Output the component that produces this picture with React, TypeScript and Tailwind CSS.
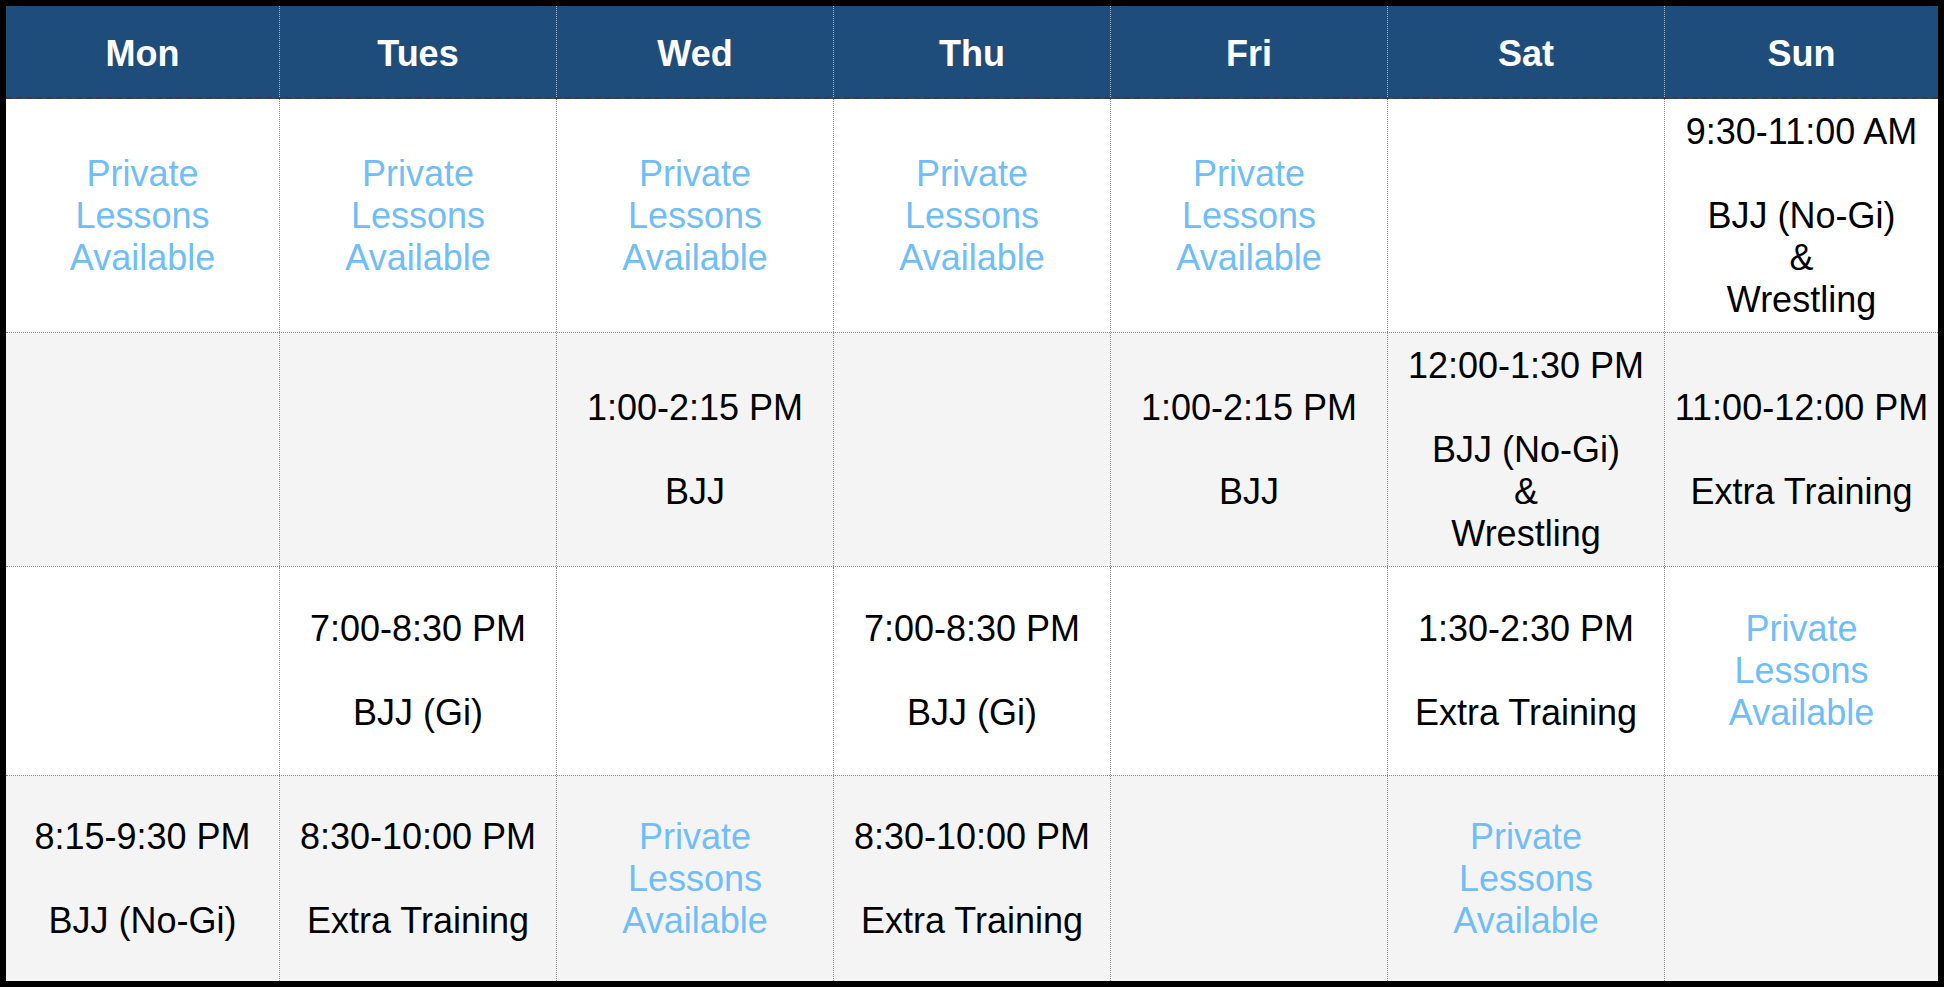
const days = ["Mon", "Tues", "Wed", "Thu", "Fri", "Sat", "Sun"];

const PRIVATE = "private";

type Cell = string[] | typeof PRIVATE | null;

const rows: { height: string; bg: string; cells: Cell[] }[] = [
  {
    height: "h-[233px]",
    bg: "bg-white",
    cells: [
      PRIVATE,
      PRIVATE,
      PRIVATE,
      PRIVATE,
      PRIVATE,
      null,
      ["9:30-11:00 AM", "", "BJJ (No-Gi)", "&", "Wrestling"],
    ],
  },
  {
    height: "h-[234px]",
    bg: "bg-[#f4f4f4]",
    cells: [
      null,
      null,
      ["1:00-2:15 PM", "", "BJJ"],
      null,
      ["1:00-2:15 PM", "", "BJJ"],
      ["12:00-1:30 PM", "", "BJJ (No-Gi)", "&", "Wrestling"],
      ["11:00-12:00 PM", "", "Extra Training"],
    ],
  },
  {
    height: "h-[209px]",
    bg: "bg-white",
    cells: [
      null,
      ["7:00-8:30 PM", "", "BJJ (Gi)"],
      null,
      ["7:00-8:30 PM", "", "BJJ (Gi)"],
      null,
      ["1:30-2:30 PM", "", "Extra Training"],
      PRIVATE,
    ],
  },
  {
    height: "h-[206px]",
    bg: "bg-[#f4f4f4]",
    cells: [
      ["8:15-9:30 PM", "", "BJJ (No-Gi)"],
      ["8:30-10:00 PM", "", "Extra Training"],
      PRIVATE,
      ["8:30-10:00 PM", "", "Extra Training"],
      null,
      PRIVATE,
      null,
    ],
  },
];

const cols = "grid grid-cols-[273px_277px_277px_277px_277px_277px_274px]";

const CellContent = ({ cell }: { cell: Cell }) => {
  if (!cell) return null;
  if (cell === PRIVATE) {
    return (
      <div className="text-[#70bdf8]">
        <div className="h-[42px]">Private</div>
        <div className="h-[42px]">Lessons</div>
        <div className="h-[42px]">Available</div>
      </div>
    );
  }
  return (
    <div className="text-black">
      {cell.map((line, i) => (
        <div key={i} className="h-[42px] whitespace-nowrap">
          {line}
        </div>
      ))}
    </div>
  );
};

export default function App() {
  return (
    <div className="h-[987px] w-[1944px] bg-black p-[6px] font-['Liberation_Sans',Arial,sans-serif]">
      <div className="w-[1932px]">
        <div
          className={`${cols} h-[93px] border-b-2 border-dashed border-[#3c3c3c] bg-[#1f4d7b]`}
        >
          {days.map((d, i) => (
            <div
              key={d}
              className={`flex items-center justify-center pt-[5px] text-[36px] font-bold text-white ${
                i > 0 ? "border-l border-dotted border-[#a9b4c0]" : ""
              }`}
            >
              {d}
            </div>
          ))}
        </div>
        {rows.map((row, r) => (
          <div
            key={r}
            className={`${cols} ${row.height} ${row.bg} ${
              r > 0 ? "border-t border-dotted border-[#8c8c8c]" : ""
            }`}
          >
            {row.cells.map((cell, i) => (
              <div
                key={i}
                className={`flex items-center justify-center text-center text-[36px] leading-[42px] ${
                  i > 0 ? "border-l border-dotted border-[#8c8c8c]" : ""
                }`}
              >
                <CellContent cell={cell} />
              </div>
            ))}
          </div>
        ))}
      </div>
    </div>
  );
}
